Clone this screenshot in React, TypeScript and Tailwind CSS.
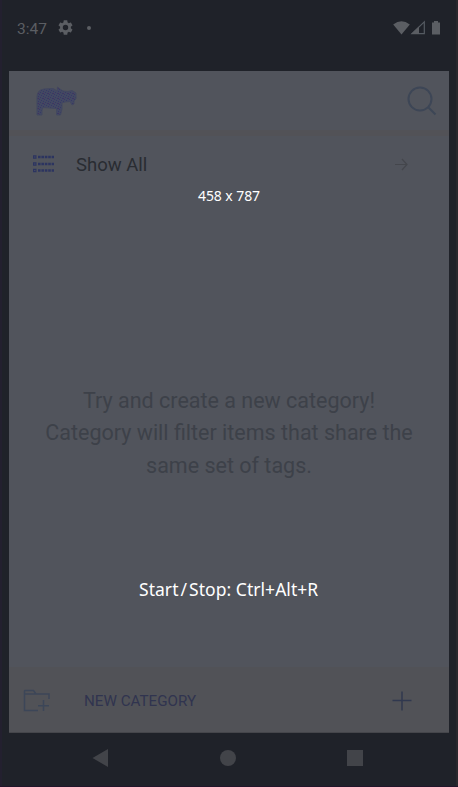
const HippoIcon = () => (
  <svg width="42" height="32" viewBox="0 0 42 32">
    <defs>
      <pattern id="dither" width="5" height="5" patternUnits="userSpaceOnUse">
        <rect width="5" height="5" fill="#434862" />
        <path d="M0 0h1v1H0zM2 1h1v1H2zM4 2h1v1H4zM1 3h1v1H1zM3 4h1v1H3z" fill="#363a66" />
        <path d="M2 3h1v1H2z" fill="#45335e" />
      </pattern>
    </defs>
    <path
      d="M1 30V12Q1 5 8 4L17 3.500Q20 5 21 6L21.500 2L24 4L27 6L32 6.500L36 5.500L40 8L40 14L38 16L38 19L36 20L34 16.500L29 17L26 18V24L24.500 30H20.500V23.500L7 22.500L6 25V30Z"
      fill="url(#dither)"
      stroke="#43485f"
      strokeWidth="1"
      strokeLinejoin="round"
    />
  </svg>
);

const GearIcon = () => (
  <svg width="15" height="15" viewBox="2 2 20 20" fill="#5b5e63">
    <path d="M19.14 12.94c.04-.3.06-.61.06-.94 0-.32-.02-.64-.07-.94l2.03-1.58c.18-.14.23-.41.12-.61l-1.92-3.32c-.12-.22-.37-.29-.59-.22l-2.39.96c-.5-.38-1.03-.7-1.62-.94l-.36-2.54c-.04-.24-.24-.41-.48-.41h-3.84c-.24 0-.43.17-.47.41l-.36 2.54c-.59.24-1.13.57-1.62.94l-2.39-.96c-.22-.08-.47 0-.59.22L2.74 8.87c-.12.21-.08.47.12.61l2.03 1.58c-.05.3-.09.63-.09.94s.02.64.07.94l-2.03 1.58c-.18.14-.23.41-.12.61l1.92 3.32c.12.22.37.29.59.22l2.39-.96c.5.38 1.03.7 1.62.94l.36 2.54c.05.24.24.41.48.41h3.84c.24 0 .44-.17.47-.41l.36-2.54c.59-.24 1.13-.56 1.62-.94l2.39.96c.22.08.47 0 .59-.22l1.92-3.32c.12-.22.07-.47-.12-.61l-2.01-1.58zM12 15.6A3.6 3.6 0 1 1 12 8.4a3.6 3.6 0 0 1 0 7.2z" />
  </svg>
);

const StatusIcons = () => (
  <svg width="48" height="16" viewBox="0 0 48 16" fill="#5b5e63">
    <path d="M0.2 4.5Q8.5-1.8 16.8 4.5L8.5 14.5Z" />
    <path d="M19 13.6L31.3 1.8V13.6Z" fill="none" stroke="#555b62" strokeWidth="1.2" />
    <path d="M18 14L26 6.5V14Z" />
    <path d="M39 2.5h2V1h4v1.500h2V14.500h-8z" />
  </svg>
);

const ListIcon = () => (
  <svg width="24" height="20" viewBox="0 0 24 20" fill="none" stroke="#2c3460">
    <path d="M1 3H4.500M1 10H4.500M1 16.500H4.500" strokeWidth="3.500" />
    <path d="M6 3H22M6 10H22M6 16.500H22" strokeWidth="2.600" strokeDasharray="2.600 .8" />
    <path d="M2 3H3.500M2 10H3.500M2 16.500H3.500" stroke="#454a63" />
  </svg>
);

const FolderIcon = () => (
  <svg width="28" height="24" viewBox="0 0 28 24" fill="none" stroke="#3c4658" strokeWidth="1.500">
    <path d="M15 21.500H1.500V2Q1.500 1.500 2 1.500H10.500L13 5H26V10M1.500 5H13" />
    <path d="M20.500 11V22M15 16.700H26" />
  </svg>
);

export default function App() {
  return (
    <div className="relative flex h-[787px] w-[458px] flex-col overflow-hidden border-b border-[#21152a] bg-[#1f2229] font-[Roboto,sans-serif]">
      <div className="absolute inset-y-0 left-0 w-0.5 bg-[#23202f]" />
      <div className="absolute inset-y-0 right-0 w-0.5 bg-[#29282d]" />
      <header className="flex h-[71px] shrink-0 items-start pl-[17px] pr-[17px] pt-5 text-[#5b5e63]">
        <span className="w-[41px] pt-px text-[15.500px] leading-4">3:47</span>
        <GearIcon />
        <span className="ml-[14px] mt-[6px] size-1 rounded-full bg-[#5b5e63]" />
        <span className="ml-auto">
          <StatusIcons />
        </span>
      </header>
      <main className="mx-[9px] flex h-[662px] shrink-0 flex-col bg-[#51545c]">
        <div className="flex h-[59px] shrink-0 items-center justify-between pl-[27px] pr-3 pt-px">
          <HippoIcon />
          <svg width="30" height="30" viewBox="0 0 30 30" fill="none" stroke="#3d4656" strokeWidth="2">
            <circle cx="13" cy="13" r="11.500" />
            <path d="M21 21L28.500 28.500" />
          </svg>
        </div>
        <div className="h-[6px] shrink-0 bg-[#525257]" />
        <div className="flex h-14 shrink-0 items-center pl-[23px] pr-10">
          <ListIcon />
          <span className="ml-5 pt-px text-[18.500px] leading-6 text-[#292c32]">Show All</span>
          <svg className="ml-auto" width="15" height="14" viewBox="0 0 15 14" fill="none" stroke="#44464c" strokeWidth="1.200">
            <path d="M1 7.500H13M8 2L13 7.500L8 13" />
          </svg>
        </div>
        <p className="mt-[193px] text-center text-[21.500px] leading-[32.300px] text-[#3d4149]">
          Try and create a new category!
          <br />
          Category will filter items that share the
          <br />
          same set of tags.
        </p>
        <div className="mt-auto flex h-[66px] shrink-0 items-center border-b border-[#45464b] bg-[#515257] pl-[14px] pr-[37px] pt-0.5">
          <FolderIcon />
          <span className="ml-[33px] pt-0.5 text-[15.200px] text-[#30344f]">NEW CATEGORY</span>
          <svg className="ml-auto" width="20" height="20" viewBox="0 0 20 20" stroke="#30384f" strokeWidth="1.500">
            <path d="M10 .5V19.500M.5 9.500H19.500" />
          </svg>
        </div>
      </main>
      <nav className="flex h-[50px] items-center justify-between pl-[92px] pr-[95px]">
        <svg width="17" height="18" viewBox="0 0 17 18" fill="#424449">
          <path d="M.5 9L16 0V18Z" />
        </svg>
        <div className="size-4 rounded-full bg-[#424449]" />
        <div className="size-4 bg-[#424449]" />
      </nav>
      <span className="absolute left-[198px] top-[188px] whitespace-nowrap font-['Noto_Sans',sans-serif] text-[14px] leading-4 tracking-[-0.080px] text-white">
        458 x 787
      </span>
      <span className="absolute left-[139px] top-[577px] whitespace-nowrap font-['Noto_Sans',sans-serif] text-[17.500px] leading-6 tracking-[0.040px] text-white">
        Start<span className="mx-[2px]">/</span>Stop: Ctrl+Alt+R
      </span>
    </div>
  );
}
